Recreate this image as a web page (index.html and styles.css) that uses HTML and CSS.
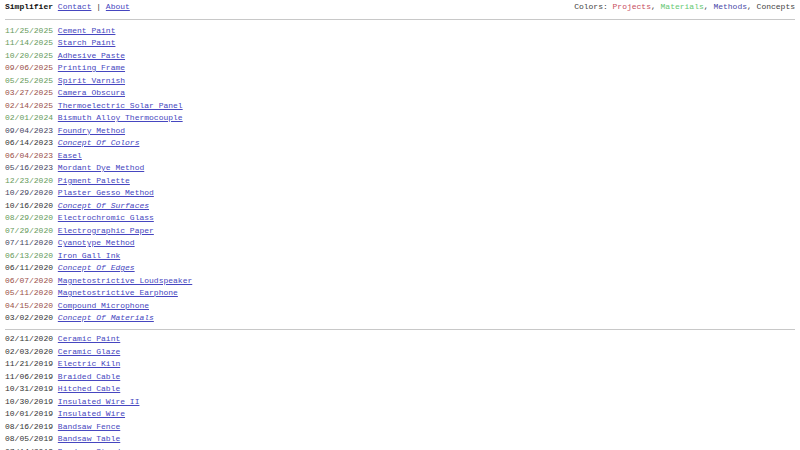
FILE: index.html
```html
<!DOCTYPE html>
<html>
<head>
<meta charset="utf-8">
<link rel="stylesheet" href="styles.css">
</head>
<body>
<header class="top">
  <div class="nav"><b class="brand">Simplifier</b> <a href="#">Contact</a> | <a href="#">About</a></div>
  <div class="legend">Colors: <span class="c-proj">Projects</span>, <span class="c-mat">Materials</span>, <span class="c-meth">Methods</span>, Concepts</div>
</header>
<hr class="rule rule-head">
<ul class="list">
  <li><span class="date mat">11/25/2025</span> <a href="#">Cement Paint</a></li>
  <li><span class="date mat">11/14/2025</span> <a href="#">Starch Paint</a></li>
  <li><span class="date mat">10/20/2025</span> <a href="#">Adhesive Paste</a></li>
  <li><span class="date proj">09/06/2025</span> <a href="#">Printing Frame</a></li>
  <li><span class="date mat">05/25/2025</span> <a href="#">Spirit Varnish</a></li>
  <li><span class="date proj">03/27/2025</span> <a href="#">Camera Obscura</a></li>
  <li><span class="date proj">02/14/2025</span> <a href="#">Thermoelectric Solar Panel</a></li>
  <li><span class="date mat">02/01/2024</span> <a href="#">Bismuth Alloy Thermocouple</a></li>
  <li><span class="date meth">09/04/2023</span> <a href="#">Foundry Method</a></li>
  <li><span class="date conc">06/14/2023</span> <a class="concept" href="#">Concept Of Colors</a></li>
  <li><span class="date proj">06/04/2023</span> <a href="#">Easel</a></li>
  <li><span class="date meth">05/16/2023</span> <a href="#">Mordant Dye Method</a></li>
  <li><span class="date mat">12/23/2020</span> <a href="#">Pigment Palette</a></li>
  <li><span class="date meth">10/29/2020</span> <a href="#">Plaster Gesso Method</a></li>
  <li><span class="date conc">10/16/2020</span> <a class="concept" href="#">Concept Of Surfaces</a></li>
  <li><span class="date mat">08/29/2020</span> <a href="#">Electrochromic Glass</a></li>
  <li><span class="date mat">07/29/2020</span> <a href="#">Electrographic Paper</a></li>
  <li><span class="date meth">07/11/2020</span> <a href="#">Cyanotype Method</a></li>
  <li><span class="date mat">06/13/2020</span> <a href="#">Iron Gall Ink</a></li>
  <li><span class="date conc">06/11/2020</span> <a class="concept" href="#">Concept Of Edges</a></li>
  <li><span class="date proj">06/07/2020</span> <a href="#">Magnetostrictive Loudspeaker</a></li>
  <li><span class="date proj">05/11/2020</span> <a href="#">Magnetostrictive Earphone</a></li>
  <li><span class="date proj">04/15/2020</span> <a href="#">Compound Microphone</a></li>
  <li><span class="date conc">03/02/2020</span> <a class="concept" href="#">Concept Of Materials</a></li>
</ul>
<hr class="rule rule-mid">
<ul class="list">
  <li><span class="date conc">02/11/2020</span> <a href="#">Ceramic Paint</a></li>
  <li><span class="date conc">02/03/2020</span> <a href="#">Ceramic Glaze</a></li>
  <li><span class="date conc">11/21/2019</span> <a href="#">Electric Kiln</a></li>
  <li><span class="date conc">11/06/2019</span> <a href="#">Braided Cable</a></li>
  <li><span class="date conc">10/31/2019</span> <a href="#">Hitched Cable</a></li>
  <li><span class="date conc">10/30/2019</span> <a href="#">Insulated Wire II</a></li>
  <li><span class="date conc">10/01/2019</span> <a href="#">Insulated Wire</a></li>
  <li><span class="date conc">08/16/2019</span> <a href="#">Bandsaw Fence</a></li>
  <li><span class="date conc">08/05/2019</span> <a href="#">Bandsaw Table</a></li>
  <li><span class="date conc">07/14/2019</span> <a href="#">Bandsaw Stand</a></li>
</ul>
</body>
</html>
```
FILE: styles.css
```css
html, body {
  margin: 0;
  padding: 0;
  background: #fff;
}
body {
  padding: 1px 5px 0 5px;
  font-family: "Liberation Mono", "Courier New", monospace;
  font-size: 8px;
  line-height: 12.5px;
  color: #333;
}
a {
  color: #4646c0;
  text-decoration: underline;
}
.top {
  display: flex;
  justify-content: space-between;
  align-items: baseline;
}
.brand {
  font-weight: bold;
  color: #111;
}
.legend {
  color: #444;
}
.c-proj { color: #c84c60; }
.c-mat { color: #66c872; }
.c-meth { color: #4a4aa8; }
.rule {
  border: 0;
  height: 1px;
  background: #c8c8c8;
}
.rule-head {
  margin: 5px 0 5px 0;
}
.rule-mid {
  margin: 4px 0 3.5px 0;
}
.list {
  list-style: none;
  margin: 0;
  padding: 0;
}
.date.mat { color: #669a5a; }
.date.proj { color: #9a5048; }
.date.meth { color: #44445e; }
.date.conc { color: #333; }
.concept {
  font-style: italic;
}
```
